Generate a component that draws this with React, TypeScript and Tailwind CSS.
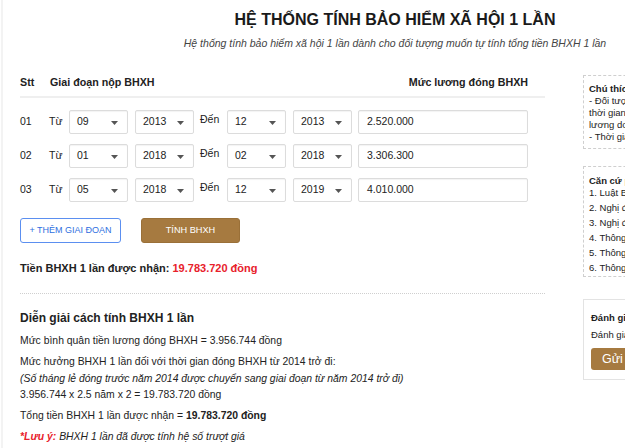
import React from "react";

const font = { fontFamily: '"Liberation Sans", Arial, sans-serif' };

const Caret = () => (
  <svg width="7" height="4" viewBox="0 0 7 4" className="absolute right-[9px] top-[10px]">
    <path d="M0 0 L7 0 L3.5 4 Z" fill="#555" />
  </svg>
);

const Select = ({ value }: { value: string }) => (
  <div className="relative w-[59px] h-[24px] border border-[#dcdcdc] rounded-[2px] bg-white shadow-[inset_0_1px_1px_rgba(0,0,0,0.05)] pl-[7px] flex items-center text-[10.5px] text-[#222]">
    {value}
    <Caret />
  </div>
);

const rows = [
  { stt: "01", m1: "09", y1: "2013", m2: "12", y2: "2013", luong: "2.520.000" },
  { stt: "02", m1: "01", y1: "2018", m2: "02", y2: "2018", luong: "3.306.300" },
  { stt: "03", m1: "05", y1: "2018", m2: "12", y2: "2019", luong: "4.010.000" },
];

export default function App() {
  return (
    <div className="w-[625px] h-[448px] overflow-hidden bg-white text-[#222]" style={font}>
      <div className="relative w-[790px] h-full pl-[20px]">
        <div className="absolute left-[1px] top-0 bottom-0 w-[2px] bg-[#f3f3f3]" />

        {/* HEADER */}
        <div className="w-[750px] text-center pt-[10px]">
          <h1 className="text-[16px] font-bold leading-[20px] text-[#1a1a1a]">HỆ THỐNG TÍNH BẢO HIỂM XÃ HỘI 1 LẦN</h1>
          <p className="text-[10.5px] italic text-[#444] leading-[13px] mt-[6.5px]">
            Hệ thống tính bảo hiểm xã hội 1 lần dành cho đối tượng muốn tự tính tổng tiền BHXH 1 lần
          </p>
        </div>

        <div className="flex gap-[38px] mt-[25.5px]">
          {/* MAIN */}
          <div className="w-[525px] shrink-0">
            <div className="flex items-center text-[10.7px] font-bold leading-[14px]">
              <span className="w-[30px]">Stt</span>
              <span>Giai đoạn nộp BHXH</span>
              <span className="ml-auto mr-[17px]">Mức lương đóng BHXH</span>
            </div>
            <div className="h-[2px] bg-[#efefef] mt-[7px]" />

            <div className="flex flex-col gap-[10px] mt-[12px]">
              {rows.map((r) => (
                <div key={r.stt} className="flex items-center text-[10.5px]">
                  <span className="w-[29px]">{r.stt}</span>
                  <span className="w-[20px]">Từ</span>
                  <Select value={r.m1} />
                  <div className="w-[7px]" />
                  <Select value={r.y1} />
                  <span className="w-[33px] pl-[6px] -mt-[4px]">Đến</span>
                  <Select value={r.m2} />
                  <div className="w-[7px]" />
                  <Select value={r.y2} />
                  <div className="w-[6px]" />
                  <div className="w-[170px] h-[24px] border border-[#dcdcdc] rounded-[2px] pl-[8px] flex items-center shadow-[inset_0_1px_1px_rgba(0,0,0,0.05)]">
                    {r.luong}
                  </div>
                </div>
              ))}
            </div>

            <div className="flex gap-[20px] mt-[16px]">
              <button className="w-[101px] h-[25px] border border-[#5b8ff0] rounded-[3px] text-[#2f6fe0] text-[9px] bg-white">
                + THÊM GIAI ĐOẠN
              </button>
              <button className="w-[99px] h-[25px] rounded-[3px] bg-[#a67a40] text-white text-[9.2px] border border-[#9a7038]">
                TÍNH BHXH
              </button>
            </div>

            <p className="text-[11px] font-bold mt-[18px] leading-[14px]">
              Tiền BHXH 1 lần được nhận: <span className="text-[#e8212b]">19.783.720 đồng</span>
            </p>

            <div className="border-t border-dotted border-[#cfcfcf] mt-[18px]" />

            <h2 className="text-[12px] font-bold mt-[17px] leading-[15px]">Diễn giải cách tính BHXH 1 lần</h2>
            <div className="text-[10.4px]">
              <p className="mt-[7.5px] leading-[14px]">Mức bình quân tiền lương đóng BHXH = 3.956.744 đồng</p>
              <p className="mt-[6.5px] leading-[16.5px]">Mức hưởng BHXH 1 lần đối với thời gian đóng BHXH từ 2014 trở đi:</p>
              <p className="italic leading-[16.5px]">
                (Số tháng lẻ đóng trước năm 2014 được chuyển sang giai đoạn từ năm 2014 trở đi)
              </p>
              <p className="leading-[16.5px]">3.956.744 x 2.5 năm x 2 = 19.783.720 đồng</p>
              <p className="mt-[4px] leading-[16px]">
                Tổng tiền BHXH 1 lần được nhận = <b>19.783.720 đồng</b>
              </p>
              <p className="italic mt-[5px] leading-[16px]">
                <span className="text-[#e8212b] font-bold">*Lưu ý:</span> BHXH 1 lần đã được tính hệ số trượt giá
              </p>
            </div>
          </div>

          {/* SIDEBAR */}
          <div className="w-[180px] shrink-0 text-[9.5px] text-[#222] whitespace-nowrap">
            <div className="border border-dashed border-[#cfcfcf] px-[5px] pt-[7px] pb-[5px] leading-[12px]">
              <div className="font-bold">Chú thích</div>
              <div>- Đối tượng tham gia BHXH có</div>
              <div>thời gian đóng BHXH và mức</div>
              <div>lương do người lao động tự khai</div>
              <div>- Thời gian đóng BHXH tính theo tháng</div>
            </div>

            <div className="border border-dashed border-[#cfcfcf] px-[5px] pt-[8px] pb-[1px] mt-[17px]">
              <div className="font-bold leading-[12px]">Căn cứ pháp lý</div>
              <div className="leading-[15px] -mt-[2px]">
                <div>1. Luật BHXH 2014</div>
                <div>2. Nghị định 115/2015/NĐ-CP</div>
                <div>3. Nghị định 134/2015/NĐ-CP</div>
                <div>4. Thông tư 59/2015/TT-BLĐTBXH</div>
                <div>5. Thông tư 01/2016/TT-BLĐTBXH</div>
                <div>6. Thông tư 35/2016/TT-BLĐTBXH</div>
              </div>
            </div>

            <div className="border border-[#e3e3e3] px-[7px] pt-[12px] pb-[9px] mt-[22px] leading-[12px]">
              <div className="font-bold">Đánh giá</div>
              <div className="mt-[5px]">Đánh giá công cụ tính BHXH</div>
              <button className="mt-[7px] h-[22px] w-[120px] bg-[#a67a40] rounded-[3px] text-white text-[12.5px] text-left pl-[11px]">
                Gửi góp ý
              </button>
            </div>
          </div>
        </div>
      </div>
    </div>
  );
}
